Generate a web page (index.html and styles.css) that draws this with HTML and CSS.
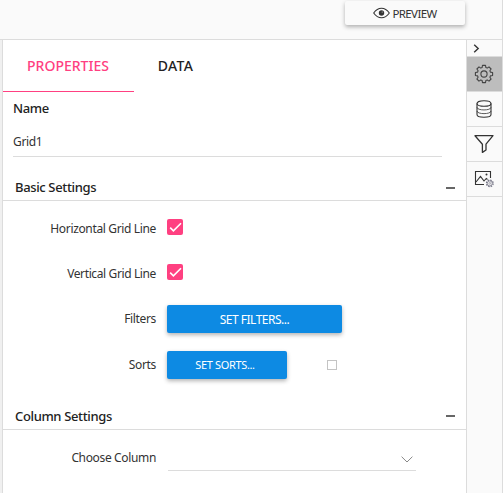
FILE: index.html
```
<!DOCTYPE html>
<html lang="en">
<head>
<meta charset="utf-8">
<title>Grid properties</title>
<link rel="stylesheet" href="styles.css">
</head>
<body>
<div class="app">
  <header class="topbar">
    <button class="preview">
      <svg width="17" height="12" viewBox="0 0 17 12"><path d="M.7 6Q4 1.2 8.5 1.2T16.3 6Q13 10.8 8.5 10.8T.7 6Z" fill="none" stroke="#333" stroke-width="1.1"/><circle cx="8.5" cy="6" r="2.7" fill="#333"/><circle cx="9.2" cy="5" r=".6" fill="#ccc"/></svg>
      <span class="t-preview">PREVIEW</span>
    </button>
  </header>
  <div class="body">
    <main class="panel">
      <nav class="tabs">
        <div class="tab active"><span>PROPERTIES</span></div>
        <div class="tab"><span class="t-data">DATA</span></div>
      </nav>
      <section class="name">
        <div class="name-label"><span>Name</span></div>
        <div class="name-input"><span>Grid1</span></div>
      </section>
      <h2 class="section first"><span>Basic Settings</span><i class="minus"></i></h2>
      <div class="rows">
        <div class="row check-row"><label><span>Horizontal Grid Line</span></label>
          <span class="check"><svg width="16" height="16" viewBox="0 0 16 16"><path d="M3.2 8.6 6.4 11.8 14 4.2" fill="none" stroke="#fff" stroke-width="1.6"/></svg></span></div>
        <div class="row check-row"><label><span class="t-vertical">Vertical Grid Line</span></label>
          <span class="check"><svg width="16" height="16" viewBox="0 0 16 16"><path d="M3.2 8.6 6.4 11.8 14 4.2" fill="none" stroke="#fff" stroke-width="1.6"/></svg></span></div>
        <div class="row button-row"><label><span>Filters</span></label><button class="btn wide"><span class="t-setfilters">SET FILTERS...</span></button></div>
        <div class="row button-row"><label><span>Sorts</span></label><button class="btn"><span class="t-setsorts">SET SORTS...</span></button><span class="box"></span></div>
      </div>
      <h2 class="section"><span>Column Settings</span><i class="minus"></i></h2>
      <div class="row choose"><label><span>Choose Column</span></label>
        <div class="select"><svg width="12" height="7" viewBox="0 0 12 7"><path d="M.6.7 6 6 11.4.7" fill="none" stroke="#888" stroke-width="1"/></svg></div></div>
    </main>
    <aside class="side">
      <div class="item collapse"><svg width="7" height="9" viewBox="0 0 7 9"><path d="M1.2.7 5.2 4.5 1.2 8.3" fill="none" stroke="#333" stroke-width="1.4"/></svg></div>
      <div class="item selected"><svg width="20" height="20" viewBox="-10 -10 20 20" fill="none" stroke="#444" stroke-width="1.1" stroke-linejoin="round"><path d="M-1.5-8.6H1.5L1.9-6.4 3.2-5.9 5-7.1 7.1-5 5.9-3.2 6.4-1.9 8.6-1.5V1.5L6.4 1.9 5.9 3.2 7.1 5 5 7.1 3.2 5.9 1.9 6.4 1.5 8.6H-1.5L-1.9 6.4-3.2 5.9-5 7.1-7.1 5-5.9 3.2-6.4 1.9-8.6 1.5V-1.5L-6.4-1.9-5.9-3.2-7.1-5-5-7.1-3.2-5.9-1.9-6.4Z"/><circle r="3.1"/></svg></div>
      <div class="item"><svg width="18" height="20" viewBox="0 0 18 20" fill="none" stroke="#333" stroke-width="1.1"><ellipse cx="9" cy="4.5" rx="7" ry="2.8"/><path d="M2 4.5V15.5C2 19.2 16 19.2 16 15.5V4.5"/><path d="M2 8.3C2 11.8 16 11.8 16 8.3M2 12C2 15.5 16 15.5 16 12" stroke-width=".8"/></svg></div>
      <div class="item"><svg width="20" height="20" viewBox="0 0 20 20" fill="none" stroke="#333" stroke-width="1.3" stroke-linejoin="round"><path d="M1 1.7H19L12 10.2V16L8.4 18.4V10.2Z"/></svg></div>
      <div class="item"><svg width="20" height="18" viewBox="0 0 20 18" fill="none" stroke="#333"><path d="M10 14.5H1.5V1.5H16.5V8" stroke-width="1.1"/><path d="M2 12 6.5 6.5 10 11 12.3 8.5 13.5 9.5" stroke-width="1.1"/><circle cx="12.5" cy="4.5" r="1" fill="#333" stroke="none"/><circle cx="15.8" cy="13.4" r="3.3" stroke="#778" stroke-width="1.3" stroke-dasharray="1.5 1.1"/><circle cx="15.8" cy="13.4" r="2.5" stroke="#778" stroke-width=".8"/><circle cx="15.8" cy="13.4" r=".9" stroke="#778" stroke-width=".6"/></svg></div>
    </aside>
  </div>
</div>
</body>
</html>
```
FILE: styles.css
```
* { box-sizing: border-box; }
body {
  margin: 0;
  font: 12px/16px "Noto Sans", "Open Sans", sans-serif;
  color: #333;
  background: #fafafa;
}
.app { height: 493px; border-right: 1px solid #dcdcdc; overflow: hidden; }
svg { display: block; flex: none; }
button { font: inherit; border: 0; padding: 0; display: flex; align-items: center; justify-content: center; }
span { white-space: nowrap; }

.topbar { height: 40px; border-bottom: 1px solid #dcdcdc; display: flex; justify-content: flex-end; padding: 1px 37px 0 0; }
.preview { width: 120px; height: 24px; gap: 2px; background: #fafafa; color: #333; border-radius: 2px; box-shadow: 0 2px 4px rgba(0, 0, 0, .3); }
.t-preview { font-size: 11.5px; letter-spacing: -.6px; padding-top: 1px; }

.body { height: 453px; display: flex; border-left: 2px solid #f0f0f0; }
.panel { width: 465px; background: #fff; border: solid #dcdcdc; border-width: 0 1px; }

.tabs { display: flex; height: 52px; }
.tab { width: 131px; display: flex; align-items: center; justify-content: center; font-size: 14px; font-weight: 500; color: #222; border-bottom: 1px solid transparent; padding: 1px 1px 0 0; }
.tab + .tab { width: 84px; }
.tab.active { color: #ff4081; border-bottom-color: #ff4081; }
.t-data { letter-spacing: .3px; }

.name { padding: 8px 24px 0 10px; height: 83px; }
.name-label { height: 17px; font-size: 13px; font-weight: 500; color: #222; letter-spacing: -.4px; }
.name-input { height: 40px; padding-top: 17px; border-bottom: 1px solid #dcdcdc; letter-spacing: -.35px; }

.section { margin: 0; height: 27px; padding: 0 11px 0 12px; display: flex; justify-content: space-between; align-items: flex-start; border-bottom: 1px solid #dcdcdc; font-size: 13px; line-height: 26px; font-weight: 500; color: #222; letter-spacing: -.36px; }
.section.first { height: 26px; line-height: 24px; }
.minus { width: 9px; height: 2px; background: #666; margin-top: 12px; }

.rows { padding-top: 4px; height: 202px; }
.row { display: flex; align-items: center; height: 46px; }
.check-row { height: 45px; padding-bottom: 2px; }
.check-row label { padding-top: 4px; }
.button-row { padding-top: 2px; }
.button-row label { padding-top: 0; }
label { width: 153px; margin-right: 11px; text-align: right; padding-top: 0; letter-spacing: -.35px; }
.t-vertical { letter-spacing: -.38px; }
.check { width: 16px; height: 16px; border-radius: 2px; background: #ff4081; }
.btn { width: 120px; height: 28px; color: #fff; background: #0d8ae3; border-radius: 2px; box-shadow: 0 2px 4px rgba(0, 0, 0, .3); }
.btn.wide { width: 175px; }
.t-setfilters { letter-spacing: -.5px; padding-top: 1px; }
.t-setsorts { font-size: 11px; letter-spacing: -.35px; padding-right: 4px; }
.box { width: 10px; height: 10px; margin-left: 40px; border: 1px solid #c4c4c4; }
.choose { height: 56px; }
.select { width: 248px; height: 26px; margin-left: 1px; border-bottom: 1px solid #dcdcdc; display: flex; justify-content: flex-end; align-items: flex-end; padding: 0 3px 7px 0; }

.side { width: 35px; }
.item { height: 35px; display: flex; align-items: center; justify-content: center; padding-right: 2px; border-bottom: 1px solid #dcdcdc; }
.collapse { height: 17px; justify-content: flex-start; padding-left: 6px; }
.selected { background: #bdbdbd; }
```
